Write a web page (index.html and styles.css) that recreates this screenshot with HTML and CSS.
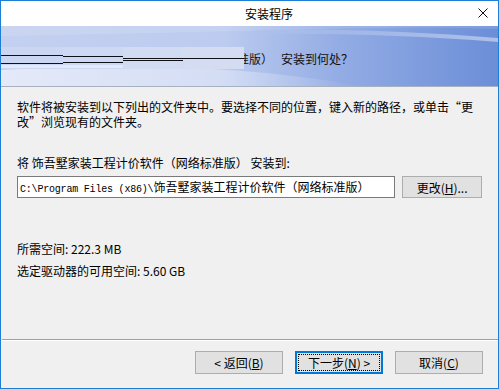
FILE: index.html
```html
<!DOCTYPE html>
<html lang="zh-CN">
<head>
    <meta charset="UTF-8">
    <title>安装程序</title>
    <link rel="stylesheet" href="styles.css">
</head>
<body>
    <div class="window">
        <div class="titlebar">
            <span class="title">安装程序</span>
            <svg class="close" width="10" height="10" viewBox="0 0 10 10">
                <path d="M0.5 0.5L9.5 9.5M9.5 0.5L0.5 9.5" stroke="#111" stroke-width="1" fill="none"/>
            </svg>
        </div>

        <div class="banner">
            <svg class="banner-bg" viewBox="0 0 497 60" preserveAspectRatio="none">
                <defs>
                    <linearGradient id="sky" x1="0" y1="0" x2="1" y2="0">
                        <stop offset="0" stop-color="#c4d0f0"/>
                        <stop offset="0.45" stop-color="#bccbef"/>
                        <stop offset="0.68" stop-color="#93ace4"/>
                        <stop offset="1" stop-color="#6b8ed8"/>
                    </linearGradient>
                    <linearGradient id="glow" x1="0" y1="0" x2="1" y2="0">
                        <stop offset="0" stop-color="#ffffff" stop-opacity="0.55"/>
                        <stop offset="0.6" stop-color="#ffffff" stop-opacity="0.35"/>
                        <stop offset="1" stop-color="#ffffff" stop-opacity="0"/>
                    </linearGradient>
                    <linearGradient id="streak" x1="0" y1="0" x2="1" y2="0">
                        <stop offset="0" stop-color="#ffffff" stop-opacity="0"/>
                        <stop offset="1" stop-color="#ffffff" stop-opacity="0.45"/>
                    </linearGradient>
                </defs>
                <rect width="497" height="60" fill="url(#sky)"/>
                <path d="M0 44 C120 36 250 40 360 60 L0 60 Z" fill="url(#glow)"/>
                <path d="M260 4 C340 2 420 6 497 12 L497 16 C420 10 340 7 260 8 Z" fill="url(#streak)"/>
                <path d="M0 0 L497 0 L497 3 C380 -1 250 6 0 10 Z" fill="#ffffff" fill-opacity="0.12"/>
            </svg>
            <div class="banner-text">饰吾墅家装工程计价软件（网络标准版）<span class="gap"></span>安装到何处？</div>
            <svg class="glitch" width="243" height="24" viewBox="0 0 243 24">
                <rect x="0" y="1" width="62" height="22" fill="#cbd7f2"/>
                <rect x="62" y="1" width="60" height="22" fill="#cdd8f2"/>
                <rect x="122" y="1" width="60" height="22" fill="#d1dbf2"/>
                <rect x="182" y="1" width="61" height="22" fill="#d3dcf0"/>
                <rect x="0" y="19" width="122" height="3" fill="#e2e9f8"/>
                <rect x="0" y="9" width="62" height="1" fill="#101018"/>
                <rect x="0" y="17" width="62" height="1" fill="#101018"/>
                <rect x="62" y="10" width="60" height="1" fill="#101018"/>
                <rect x="62" y="16" width="60" height="1" fill="#101018"/>
                <rect x="122" y="12" width="60" height="1" fill="#101018"/>
                <rect x="122" y="14" width="60" height="1" fill="#101018"/>
                <rect x="182" y="12" width="61" height="1" fill="#101018"/>
            </svg>
        </div>

        <div class="content">
            <p class="intro">软件将被安装到以下列出的文件夹中。要选择不同的位置，键入新的路径，或单击“更<br>改”浏览现有的文件夹。</p>

            <p class="label">将 饰吾墅家装工程计价软件（网络标准版） 安装到:</p>
            <div class="path-row">
                <div class="path-box"><span class="mono">C:\Program Files (x86)\</span>饰吾墅家装工程计价软件（网络标准版）</div>
                <button class="btn btn-small">更改(<u>H</u>)...</button>
            </div>

            <div class="space-info">
                <p>所需空间: 222.3 MB</p>
                <p>选定驱动器的可用空间: 5.60 GB</p>
            </div>
        </div>

        <div class="footer">
            <button class="btn">&lt; 返回(<u>B</u>)</button>
            <button class="btn btn-default">下一步(<u>N</u>) &gt;</button>
            <button class="btn">取消(<u>C</u>)</button>
        </div>
    </div>
</body>
</html>
```

FILE: styles.css
```css
* {
    margin: 0;
    padding: 0;
    box-sizing: border-box;
}

body {
    background: #f0f0f0;
    font-family: "Noto Sans CJK SC", "Noto Sans", sans-serif;
    font-size: 12px;
    color: #000;
}

.window {
    width: 499px;
    height: 389px;
    border: 1px solid #1c7fd5;
    display: flex;
    flex-direction: column;
    background: #f0f0f0;
}

.titlebar {
    height: 25px;
    background: #fff;
    display: flex;
    align-items: center;
}

.title {
    margin-left: 244px;
    line-height: 15px;
}

.close {
    margin-left: auto;
    margin-right: 10px;
    margin-top: -1px;
}

.banner {
    position: relative;
    height: 61px;
    border-bottom: 1px solid #a9b0bf;
    display: flex;
    align-items: center;
    padding: 4px 0 0 56px;
    overflow: hidden;
}

.banner-bg {
    position: absolute;
    top: 0;
    left: 0;
    width: 100%;
    height: 60px;
}

.banner-text {
    position: relative;
    line-height: 15px;
    color: #111;
    white-space: nowrap;
}

.gap {
    display: inline-block;
    width: 8px;
}

.glitch {
    position: absolute;
    left: 0;
    top: 20px;
}

.content {
    flex: 1;
    padding: 12px 16px 0;
}

.intro {
    line-height: 15px;
    white-space: nowrap;
}

.label {
    margin-top: 26px;
    line-height: 15px;
}

.path-row {
    display: flex;
    gap: 7px;
    margin-top: 6px;
}

.path-box {
    width: 379px;
    height: 22px;
    background: #fff;
    border: 1px solid #7a7a7a;
    padding-left: 2px;
    line-height: 20px;
    white-space: nowrap;
    overflow: hidden;
}

.mono {
    font-family: "Liberation Mono", monospace;
    font-size: 10px;
    letter-spacing: -0.2px;
}

.space-info {
    margin-top: 40px;
    line-height: 22px;
}

.footer {
    border-top: 1px solid #a0a0a0;
    box-shadow: inset 0 1px #fff;
    margin-left: 1px;
    padding: 11px 15px 14px 0;
    display: flex;
    justify-content: flex-end;
    gap: 12px;
}

.btn {
    width: 88px;
    height: 23px;
    background: #e1e1e1;
    border: 1px solid #adadad;
    font-family: inherit;
    font-size: 12px;
    line-height: 15px;
    color: #000;
}

.btn-small {
    width: 80px;
    height: 22px;
}

.btn-default {
    border: 1px solid #0078d7;
    box-shadow: inset 0 0 0 1px #0078d7;
    outline: 1px dotted #000;
    outline-offset: -4px;
}
```
